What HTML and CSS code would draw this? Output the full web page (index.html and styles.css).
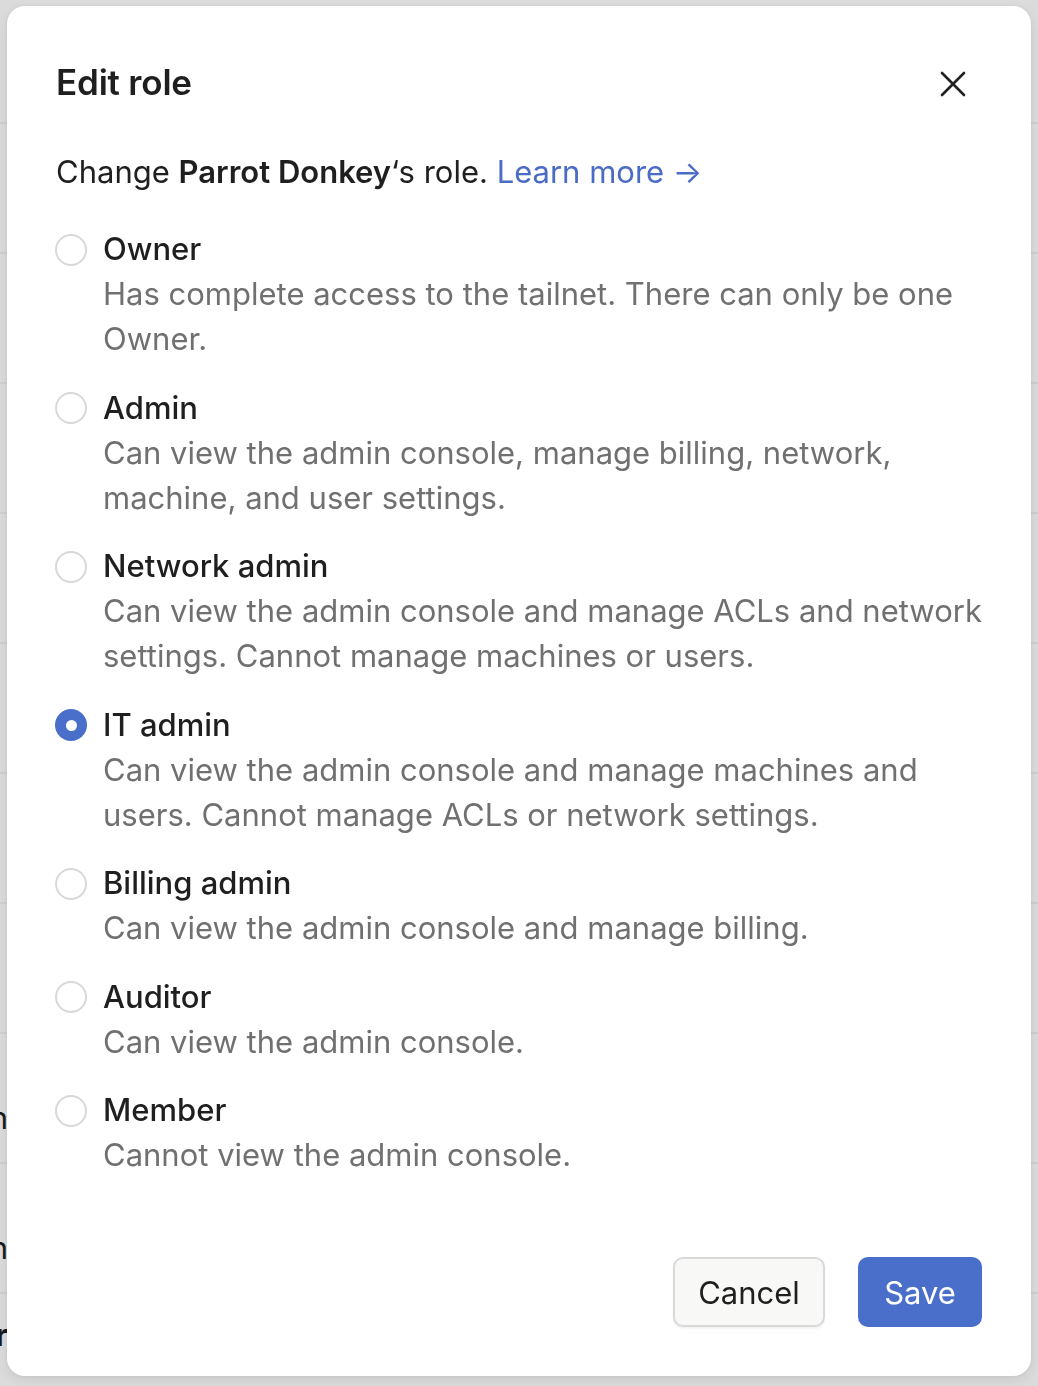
FILE: index.html
```html
<!DOCTYPE html>
<html lang="en">
<head>
<meta charset="utf-8">
<title>Edit role</title>
<link rel="stylesheet" href="styles.css">
</head>
<body>
<div class="backdrop">
  <div class="bg-row"><span class="bg-cell"></span></div>
  <div class="bg-row"><span class="bg-cell"></span></div>
  <div class="bg-row"><span class="bg-cell"></span></div>
  <div class="bg-row"><span class="bg-cell"></span></div>
  <div class="bg-row"><span class="bg-cell"></span></div>
  <div class="bg-row"><span class="bg-cell"></span></div>
  <div class="bg-row"><span class="bg-cell"></span></div>
  <div class="bg-row"><span class="bg-cell"></span></div>
  <div class="bg-row"><span class="bg-cell">Admin</span></div>
  <div class="bg-row"><span class="bg-cell">Admin</span></div>
  <div class="bg-row bg-row-last"><span class="bg-cell bold">Member</span></div>
</div>

<div class="dialog" role="dialog" aria-labelledby="dlg-title">
  <div class="dialog-header">
    <h2 id="dlg-title" class="dialog-title">Edit role</h2>
    <button class="close-btn" aria-label="Close">
      <svg width="26" height="26" viewBox="0 0 26 26" fill="none" stroke="#222" stroke-width="2.6" stroke-linecap="round">
        <path d="M2 2 L24 24 M24 2 L2 24"/>
      </svg>
    </button>
  </div>

  <p class="intro">Change <strong>Parrot Donkey</strong>‘s role. <a class="link" href="#">Learn more →</a></p>

  <div class="options">
    <label class="option">
      <span class="radio"></span>
      <span class="option-text">
        <span class="option-title">Owner</span>
        <span class="option-desc">Has complete access to the tailnet. There can only be one Owner.</span>
      </span>
    </label>
    <label class="option">
      <span class="radio"></span>
      <span class="option-text">
        <span class="option-title">Admin</span>
        <span class="option-desc">Can view the admin console, manage billing, network, machine, and user settings.</span>
      </span>
    </label>
    <label class="option">
      <span class="radio"></span>
      <span class="option-text">
        <span class="option-title">Network admin</span>
        <span class="option-desc">Can view the admin console and manage ACLs and network settings. Cannot manage machines or users.</span>
      </span>
    </label>
    <label class="option">
      <span class="radio checked"></span>
      <span class="option-text">
        <span class="option-title">IT admin</span>
        <span class="option-desc">Can view the admin console and manage machines and users. Cannot manage ACLs or network settings.</span>
      </span>
    </label>
    <label class="option">
      <span class="radio"></span>
      <span class="option-text">
        <span class="option-title">Billing admin</span>
        <span class="option-desc">Can view the admin console and manage billing.</span>
      </span>
    </label>
    <label class="option">
      <span class="radio"></span>
      <span class="option-text">
        <span class="option-title">Auditor</span>
        <span class="option-desc">Can view the admin console.</span>
      </span>
    </label>
    <label class="option">
      <span class="radio"></span>
      <span class="option-text">
        <span class="option-title">Member</span>
        <span class="option-desc">Cannot view the admin console.</span>
      </span>
    </label>
  </div>

  <div class="dialog-footer">
    <button class="btn btn-secondary">Cancel</button>
    <button class="btn btn-primary">Save</button>
  </div>
</div>
</body>
</html>
```

FILE: styles.css
```css
* {
  box-sizing: border-box;
}

html, body {
  margin: 0;
  padding: 0;
}

body {
  width: 1038px;
  height: 1386px;
  overflow: hidden;
  background: #dbdbdb;
  font-family: Inter, "Noto Sans", "Liberation Sans", sans-serif;
  color: #1f1f1f;
}

.bg-row {
  height: 130px;
  border-bottom: 2px solid #cfcfcf;
  display: flex;
  align-items: flex-end;
}

.bg-row:first-child {
  height: 124px;
}

.bg-row-last {
  align-items: flex-start;
}

.bg-cell {
  width: 8px;
  overflow: hidden;
  display: flex;
  justify-content: flex-end;
  white-space: nowrap;
  font-size: 31px;
  line-height: 45px;
  color: #1a1a1a;
  margin-bottom: 22px;
}

.bg-cell.bold {
  font-weight: 700;
  margin: 18px 0 0;
}

.dialog {
  position: fixed;
  left: 7px;
  top: 6px;
  width: 1024px;
  height: 1370px;
  background: #ffffff;
  border-radius: 18px;
  box-shadow: 0 0 4px rgba(0, 0, 0, 0.06), 0 4px 12px rgba(0, 0, 0, 0.08);
  padding: 49px;
  display: flex;
  flex-direction: column;
}

.dialog-header {
  display: flex;
  align-items: center;
  justify-content: space-between;
  height: 54px;
}

.dialog-title {
  margin: 0;
  font-size: 35px;
  font-weight: 600;
  letter-spacing: -0.2px;
  color: #1f1f1f;
  line-height: 54px;
}

.close-btn {
  border: 0;
  background: transparent;
  padding: 0;
  width: 26px;
  height: 26px;
  margin-right: 16px;
  margin-top: 4px;
  display: flex;
  align-items: center;
  justify-content: center;
  cursor: pointer;
}

.intro {
  margin: 40px 0 0;
  font-size: 31px;
  line-height: 45px;
  color: #1f1f1f;
}

.intro strong {
  font-weight: 600;
}

.link {
  color: #4a6bc6;
  text-decoration: none;
}

.options {
  margin-top: 32px;
  display: flex;
  flex-direction: column;
  gap: 23.5px;
}

.option {
  display: flex;
  align-items: flex-start;
  gap: 16px;
}

.radio {
  flex: none;
  width: 32px;
  height: 32px;
  margin-top: 7.5px;
  margin-left: -1px;
  border-radius: 50%;
  border: 2px solid #d8d8d8;
  background: #ffffff;
  display: flex;
  align-items: center;
  justify-content: center;
}

.radio.checked {
  border: 0;
  background: #4a6fcb;
}

.radio.checked::after {
  content: "";
  width: 11px;
  height: 11px;
  border-radius: 50%;
  background: #ffffff;
}

.option-text {
  display: flex;
  flex-direction: column;
  font-size: 31px;
  line-height: 45px;
}

.option-title {
  color: #1f1f1f;
  font-weight: 500;
}

.option-desc {
  color: #707070;
}

.dialog-footer {
  margin-top: auto;
  display: flex;
  justify-content: flex-end;
  gap: 33px;
}

.btn {
  height: 70px;
  border-radius: 10px;
  font-family: inherit;
  font-size: 31px;
  padding: 0 20px;
  cursor: pointer;
}

.btn-secondary {
  background: #f8f8f7;
  border: 2px solid #d9d9d9;
  color: #1f1f1f;
  box-shadow: 0 2px 2px rgba(0, 0, 0, 0.05);
  width: 152px;
}

.btn-primary {
  background: #4a6fcb;
  border: 0;
  color: #ffffff;
  width: 124px;
}
```
